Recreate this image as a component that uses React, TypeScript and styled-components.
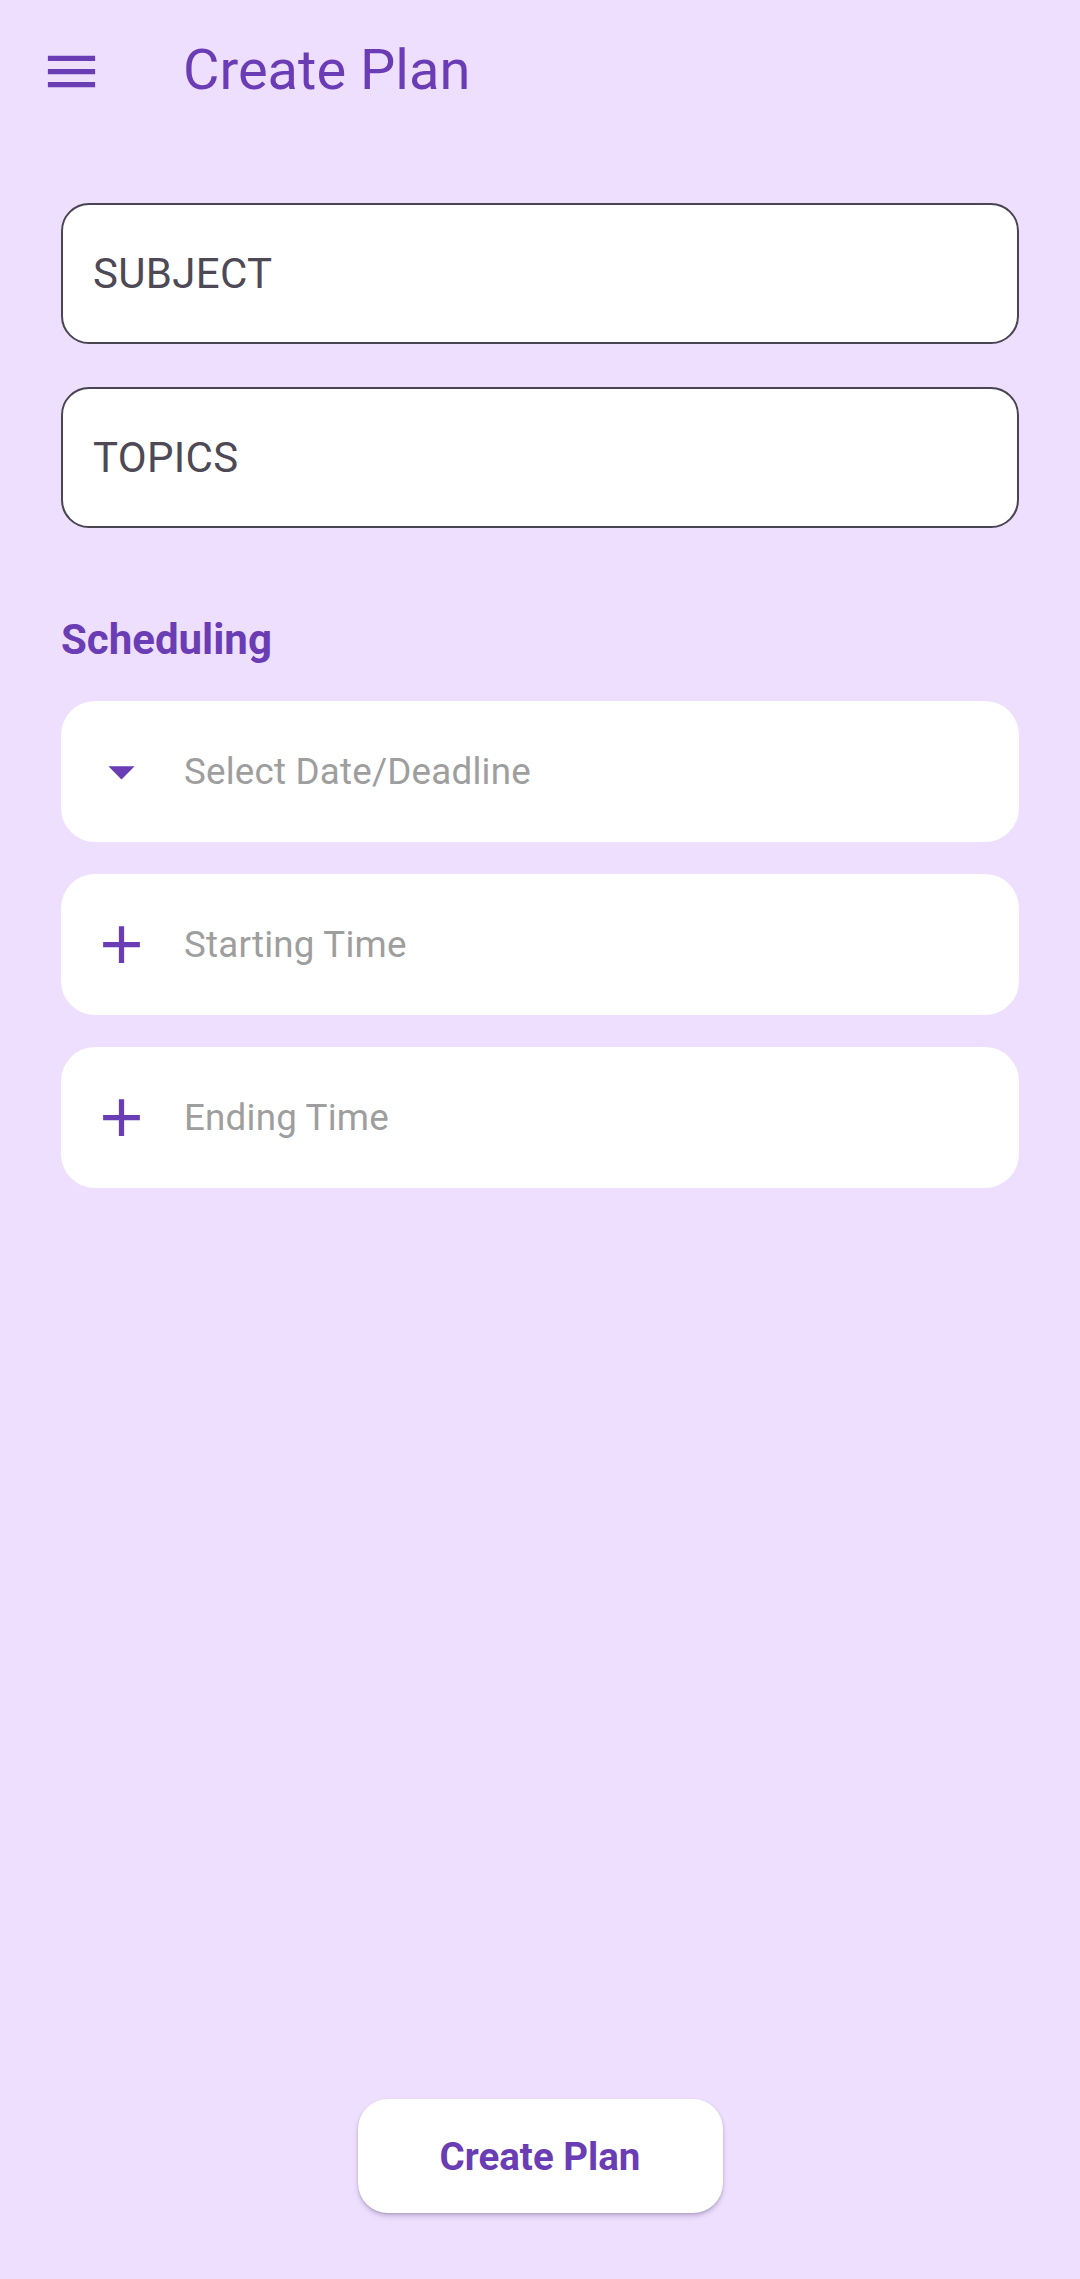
import React from "react";
import styled, { createGlobalStyle } from "styled-components";

const GlobalStyle = createGlobalStyle`
  html, body {
    margin: 0;
    padding: 0;
    background: #efdfff;
  }
  body {
    font-family: Roboto, "Noto Sans", "Liberation Sans", sans-serif;
  }
  * { box-sizing: border-box; }
`;

const PURPLE = "#6a3db5";

const Page = styled.div`
  min-height: 100vh;
  display: flex;
  flex-direction: column;
  background: #efdfff;
`;

const AppBar = styled.header`
  height: 142px;
  display: flex;
  align-items: center;
  padding-left: 40px;
`;

const IconBox = styled.span<{ $size?: number }>`
  width: ${(p) => p.$size ?? 63}px;
  height: ${(p) => p.$size ?? 63}px;
  display: inline-flex;
  align-items: center;
  justify-content: center;
  flex-shrink: 0;
  color: ${PURPLE};
  svg {
    width: 100%;
    height: 100%;
    fill: currentColor;
  }
`;

const Title = styled.h1`
  margin: -2px 0 0 80px;
  font-size: 56px;
  font-weight: 400;
  color: ${PURPLE};
  line-height: 1;
`;

const Form = styled.main`
  display: flex;
  flex-direction: column;
  padding: 61px 61px 0;
`;

const Fields = styled.div`
  display: flex;
  flex-direction: column;
  gap: 43px;
`;

const OutlinedField = styled.div`
  height: 141px;
  border: 2.6px solid #4a4553;
  border-radius: 28px;
  background: #ffffff;
  display: flex;
  align-items: center;
  padding-left: 30px;
  font-size: 42px;
  color: #4d4955;
  letter-spacing: 0.3px;
`;

const SectionTitle = styled.h2`
  margin: 87px 0 36px;
  height: 50px;
  line-height: 50px;
  font-size: 42px;
  font-weight: 700;
  color: ${PURPLE};
`;

const Tiles = styled.div`
  display: flex;
  flex-direction: column;
  gap: 32px;
`;

const Tile = styled.div`
  height: 141px;
  background: #ffffff;
  border-radius: 34px;
  display: flex;
  align-items: center;
  padding-left: 29px;
`;

const TileText = styled.span`
  margin-left: 31px;
  font-size: 36.75px;
  color: #9e9e9e;
  letter-spacing: 0.2px;
`;

const Spacer = styled.div`
  flex: 1;
`;

const Footer = styled.div`
  display: flex;
  justify-content: center;
  padding-bottom: 66px;
`;

const PrimaryButton = styled.button`
  width: 365px;
  height: 114px;
  border: none;
  border-radius: 30px;
  background: #ffffff;
  color: ${PURPLE};
  font-family: Roboto, "Noto Sans", sans-serif;
  font-size: 38.5px;
  font-weight: 700;
  box-shadow: 0 3px 5px rgba(60, 40, 90, 0.25), 0 1px 2px rgba(0, 0, 0, 0.12);
  cursor: pointer;
`;

const MenuIcon = () => (
  <svg viewBox="0 0 24 24">
    <path d="M3 18h18v-2H3v2zm0-5h18v-2H3v2zm0-7v2h18V6H3z" />
  </svg>
);

const DropIcon = () => (
  <svg viewBox="0 0 24 24">
    <path d="M7 10l5 5 5-5z" />
  </svg>
);

const AddIcon = () => (
  <svg viewBox="0 0 24 24">
    <path d="M19 13h-6v6h-2v-6H5v-2h6V5h2v6h6v2z" />
  </svg>
);

const tiles = [
  { icon: <DropIcon />, label: "Select Date/Deadline" },
  { icon: <AddIcon />, label: "Starting Time" },
  { icon: <AddIcon />, label: "Ending Time" },
];

export default function App() {
  return (
    <>
      <GlobalStyle />
      <Page>
        <AppBar>
          <IconBox>
            <MenuIcon />
          </IconBox>
          <Title>Create Plan</Title>
        </AppBar>
        <Form>
          <Fields>
            <OutlinedField>SUBJECT</OutlinedField>
            <OutlinedField>TOPICS</OutlinedField>
          </Fields>
          <SectionTitle>Scheduling</SectionTitle>
          <Tiles>
            {tiles.map((t) => (
              <Tile key={t.label}>
                <IconBox>{t.icon}</IconBox>
                <TileText>{t.label}</TileText>
              </Tile>
            ))}
          </Tiles>
        </Form>
        <Spacer />
        <Footer>
          <PrimaryButton>Create Plan</PrimaryButton>
        </Footer>
      </Page>
    </>
  );
}
